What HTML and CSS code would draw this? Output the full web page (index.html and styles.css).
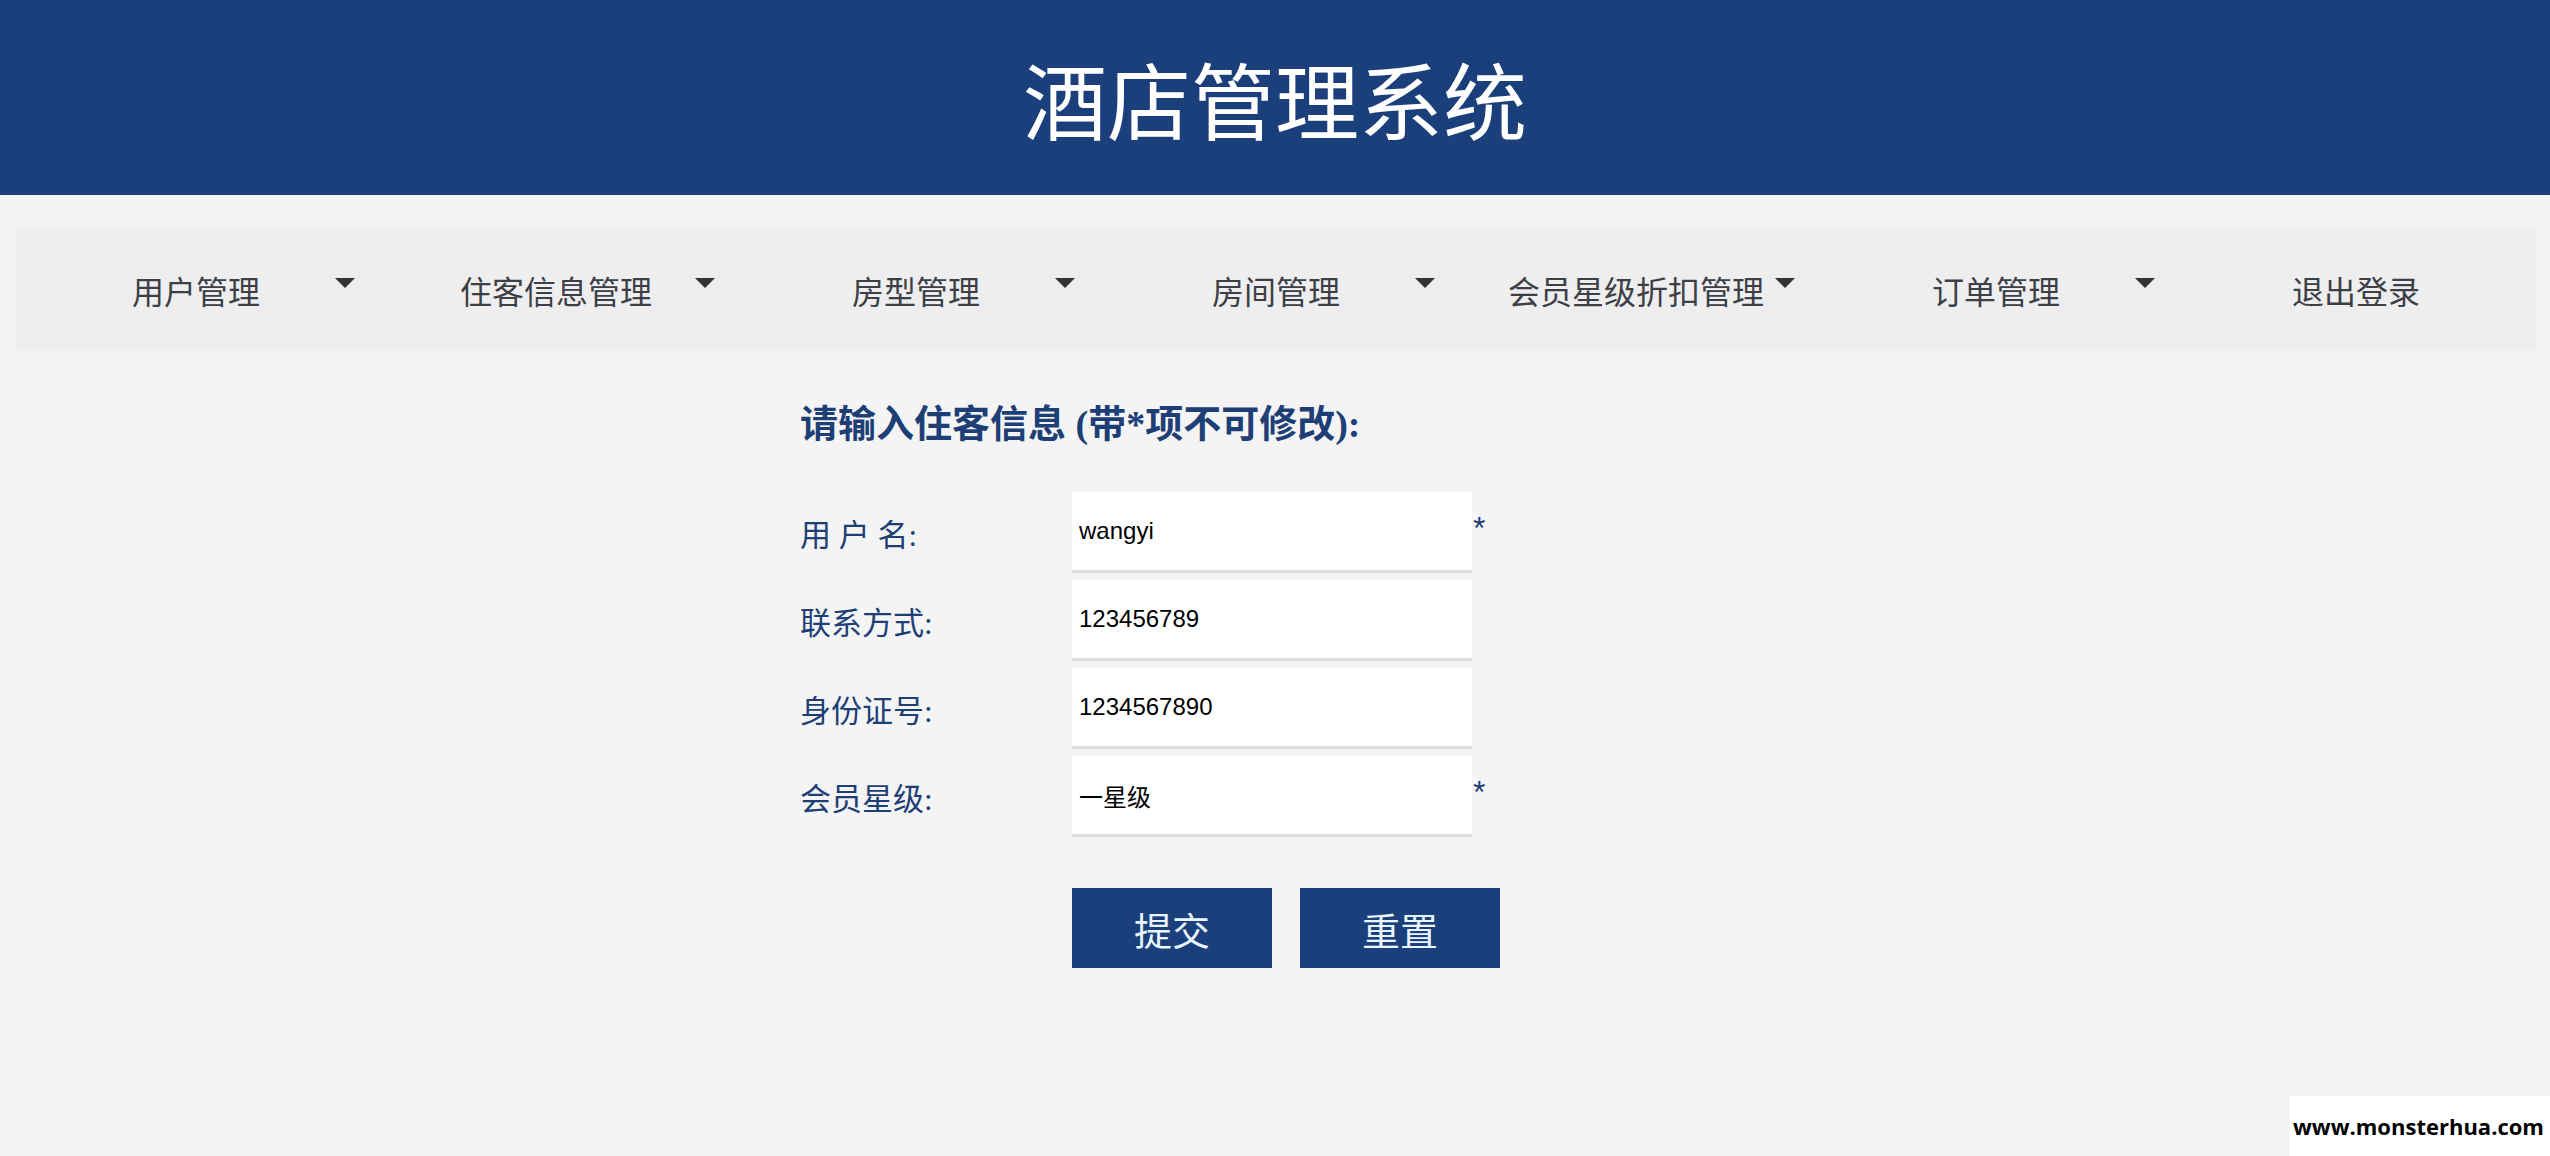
FILE: index.html
```html
<!DOCTYPE html>
<html>
  <head>
    <title>酒店管理系统</title>
    <meta charset="UTF-8">
    <link rel="stylesheet" href="styles.css">
  </head>
  <body>
    <div class="header">
      <h1>酒店管理系统</h1>
    </div>
    <div class="navbar">
      <a class="drop">用户管理<span class="arrow"></span></a>
      <a class="drop">住客信息管理<span class="arrow"></span></a>
      <a class="drop">房型管理<span class="arrow"></span></a>
      <a class="drop">房间管理<span class="arrow"></span></a>
      <a class="drop">会员星级折扣管理<span class="arrow"></span></a>
      <a class="drop">订单管理<span class="arrow"></span></a>
      <a>退出登录</a>
    </div>

    <div id="content">
      <h3>请输入住客信息 (带*项不可修改):</h3>
      <form class="guestForm">
        <div class="row">
          <label for="userName">用 户 名:</label>
          <input id="userName" value="wangyi" readonly>
          <span class="star">*</span>
        </div>
        <div class="row">
          <label for="phone">联系方式:</label>
          <input id="phone" value="123456789">
        </div>
        <div class="row">
          <label for="idCard">身份证号:</label>
          <input id="idCard" value="1234567890">
        </div>
        <div class="row">
          <label for="level">会员星级:</label>
          <input id="level" value="一星级" readonly>
          <span class="star">*</span>
        </div>
        <div class="buttons">
          <button type="button">提交</button>
          <button type="reset">重置</button>
        </div>
      </form>
    </div>

    <!--watermark-->
    <div class="mark">www.monsterhua.com</div>
  </body>
</html>
```

FILE: styles.css
```css
* {
  box-sizing: border-box;
}
body,html{
  height:100%;
}
body {
  font-family: "Liberation Serif", "Noto Sans CJK SC", serif;
  margin: 0;
  background:#f4f4f4;
  overflow:hidden;
}
.header{
  background:#1b3f7b;
  height:195px;
  display:flex;
  align-items:center;
  justify-content:center;
}
.header h1{
  margin:0;
  color:white;
  font-size:84px;
  font-weight:normal;
}
.navbar{
  margin:32px 14px 0 16px;
  height:124px;
  background:#eeeeee;
  display:grid;
  grid-template-columns:repeat(7, 1fr);
}
.navbar a{
  position:relative;
  display:flex;
  align-items:center;
  justify-content:center;
  color:#3d3f46;
  font-size:32px;
  cursor:pointer;
  padding-top:2px;
}
/* little triangle of the dropdown */
.navbar .arrow{
  position:absolute;
  right:21px;
  top:51px;
  width:0;
  height:0;
  border-left:10px solid transparent;
  border-right:10px solid transparent;
  border-top:10px solid #333;
}

#content{
  width:950px;
  margin:0 auto;
}
#content h3{
  margin:50px 0 44px;
  color:#1e3f76;
  font-size:38px;
  line-height:47px;
  font-weight:bold;
}
.row{
  display:flex;
  align-items:center;
  margin-bottom:7px;
}
.row label{
  width:272px;
  color:#1e3f76;
  font-size:31px;
}
.row input{
  width:400px;
  height:81px;
  border:none;
  border-bottom:3px solid #dcdcdc;
  background:white;
  padding:0 7px;
  font-family:"Liberation Sans", "Noto Sans CJK SC", sans-serif;
  font-size:24px;
  color:#000;
  outline:none;
}
.row .star{
  align-self:flex-start;
  margin-top:19px;
  margin-left:1px;
  color:#1e3f76;
  font-family:"Liberation Sans", sans-serif;
  font-size:32px;
  line-height:34px;
}
.buttons{
  margin:51px 0 0 272px;
  display:flex;
  gap:28px;
}
.buttons button{
  width:200px;
  height:80px;
  border:none;
  background:#1b3f7b;
  color:#eaf6ff;
  font-family:"Noto Sans CJK SC", sans-serif;
  font-size:38px;
  cursor:pointer;
}
.mark{
  position:absolute;
  right:0;
  bottom:0;
  width:260px;
  height:60px;
  background:white;
  padding:0 0 0 3px;
  display:flex;
  align-items:center;
  font-family:"Open Sans", sans-serif;
  font-weight:bold;
  font-size:22px;
  color:#000;
}
```
